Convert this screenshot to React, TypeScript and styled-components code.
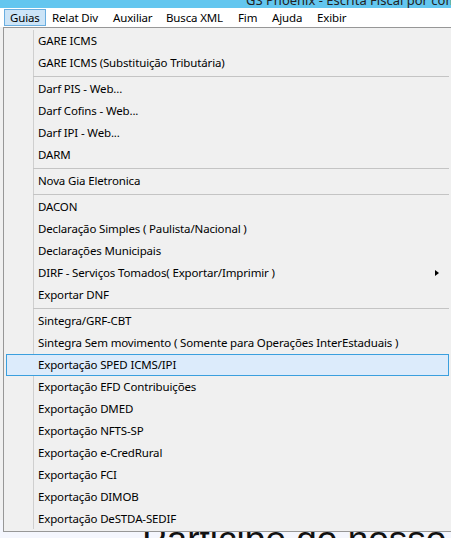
import React from "react"
import styled, { createGlobalStyle } from "styled-components"

const GlobalStyle = createGlobalStyle`
  html, body {
    margin: 0;
    padding: 0;
  }
  body {
    width: 451px;
    height: 538px;
    overflow: hidden;
    background: #f0f0f0;
    font-family: "Noto Sans", "Liberation Sans", sans-serif;
    color: #000;
  }
`

type Entry = { label: string; sub?: boolean; hot?: boolean } | "sep"

const bar = [
  { label: "Guias", width: 42, active: true },
  { label: "Relat Div", width: 61 },
  { label: "Auxiliar", width: 53 },
  { label: "Busca XML", width: 72 },
  { label: "Fim", width: 34 },
  { label: "Ajuda", width: 45 },
  { label: "Exibir", width: 44 },
]

const entries: Entry[] = [
  { label: "GARE ICMS" },
  { label: "GARE ICMS (Substituição Tributária)" },
  "sep",
  { label: "Darf PIS - Web..." },
  { label: "Darf Cofins - Web..." },
  { label: "Darf IPI - Web..." },
  { label: "DARM" },
  "sep",
  { label: "Nova Gia Eletronica" },
  "sep",
  { label: "DACON" },
  { label: "Declaração Simples ( Paulista/Nacional )" },
  { label: "Declarações Municipais" },
  { label: "DIRF - Serviços Tomados( Exportar/Imprimir )", sub: true },
  { label: "Exportar DNF" },
  "sep",
  { label: "Sintegra/GRF-CBT" },
  { label: "Sintegra Sem movimento ( Somente para Operações InterEstaduais )" },
  { label: "Exportação SPED ICMS/IPI", hot: true },
  { label: "Exportação EFD Contribuições" },
  { label: "Exportação DMED" },
  { label: "Exportação NFTS-SP" },
  { label: "Exportação e-CredRural" },
  { label: "Exportação FCI" },
  { label: "Exportação DIMOB" },
  { label: "Exportação DeSTDA-SEDIF" },
]

// the few pixels of the window behind the menu, left of its border
const strip = [
  { h: 2, bg: "#ffffff" },
  { h: 1, bg: "#a0a0a0" },
  { h: 43, bg: "#ffffff" },
  { h: 1, bg: "#a0a0a0" },
  { h: 42, bg: "#f7f7f7" },
  { h: 1, bg: "#a0a0a0" },
  { h: 113, bg: "#f0f0f0" },
  { h: 170, bg: "#e1efdc" },
  { h: 138, bg: "#f3f5fc" },
]

const App = () => {
  return (
    <>
      <GlobalStyle />
      <Window>
        <TitleBar>
          <TitleText>GS Phoenix - Escrita Fiscal por compet</TitleText>
        </TitleBar>

        <MenuBar>
          {bar.map(({ label, width, active }) => (
            <BarItem key={label} $width={width} $active={!!active}>
              {label}
            </BarItem>
          ))}
        </MenuBar>

        <Body>
          <LeftStrip>
            {strip.map((s, i) => (
              <StripBlock key={i} $h={s.h} $bg={s.bg} />
            ))}
          </LeftStrip>
          <Content>
            <Filler />
            <Banner>Participe do nosso programa</Banner>
          </Content>
        </Body>

        <Dropdown>
          {entries.map((e, i) =>
            e === "sep" ? (
              <Separator key={i} />
            ) : (
              <Item key={i} $hot={!!e.hot}>
                <span>{e.label}</span>
                {e.sub && <SubArrow />}
              </Item>
            )
          )}
        </Dropdown>
      </Window>
    </>
  )
}

export default App

const Window = styled.div`
  position: relative;
  width: 451px;
  height: 538px;
  display: flex;
  flex-direction: column;
  overflow: hidden;
`

const TitleBar = styled.div`
  height: 8px;
  background: #63c6ef;
  display: flex;
  align-items: flex-end;
  overflow: hidden;
  padding: 0 0 1px 246px;
  box-sizing: border-box;
`

const TitleText = styled.div`
  font-size: 13px;
  line-height: 14px;
  color: #222;
  white-space: nowrap;
`

const MenuBar = styled.div`
  height: 19px;
  background: #ffffff;
  display: flex;
  align-items: center;
  padding-left: 4px;
`

const BarItem = styled.div<{ $width: number; $active: boolean }>`
  width: ${(p) => p.$width}px;
  height: 17px;
  box-sizing: border-box;
  padding-left: 5px;
  font-size: 11.5px;
  letter-spacing: -0.15px;
  line-height: 15px;
  white-space: nowrap;
  border: 1px solid ${(p) => (p.$active ? "#6aaee0" : "transparent")};
  background: ${(p) => (p.$active ? "#cce4f7" : "transparent")};
`

const Body = styled.div`
  flex: 1;
  display: flex;
  min-height: 0;
`

const LeftStrip = styled.div`
  width: 3px;
  display: flex;
  flex-direction: column;
`

const StripBlock = styled.div<{ $h: number; $bg: string }>`
  height: ${(p) => p.$h}px;
  flex-shrink: 0;
  background: ${(p) => p.$bg};
`

const Content = styled.div`
  flex: 1;
  display: flex;
  flex-direction: column;
`

const Filler = styled.div`
  flex: 1;
  background: #f0f0f0;
`

const Banner = styled.div`
  height: 18px;
  overflow: hidden;
  background: #f4f6fd;
  padding-left: 142px;
  font-family: "Liberation Sans", Arial, sans-serif;
  font-size: 37px;
  line-height: 40px;
  white-space: nowrap;
  color: #111;
`

const Dropdown = styled.div`
  position: absolute;
  top: 27px;
  left: 3px;
  width: 449px;
  box-sizing: border-box;
  border: 1px solid #979797;
  padding: 2px 0 1px;
  background-color: #f0f0f0;
  background-image: linear-gradient(#cfcfcf, #cfcfcf);
  background-size: 1px calc(100% - 4px);
  background-position: 29px 2px;
  background-repeat: no-repeat;
  display: flex;
  flex-direction: column;
`

const Item = styled.div<{ $hot: boolean }>`
  height: 22px;
  margin: 0 2px;
  box-sizing: border-box;
  padding: 0 9px 0 31px;
  display: flex;
  align-items: center;
  justify-content: space-between;
  font-size: 11.5px;
  letter-spacing: -0.15px;
  line-height: 20px;
  white-space: nowrap;
  border: 1px solid ${(p) => (p.$hot ? "#3a9fde" : "transparent")};
  background: ${(p) => (p.$hot ? "#dcebfb" : "transparent")};
`

const SubArrow = styled.span`
  width: 0;
  height: 0;
  border-left: 4px solid #000;
  border-top: 3.5px solid transparent;
  border-bottom: 3.5px solid transparent;
`

const Separator = styled.div`
  height: 1px;
  margin: 2px 2px 1px 29px;
  background: #c4c4c4;
`
